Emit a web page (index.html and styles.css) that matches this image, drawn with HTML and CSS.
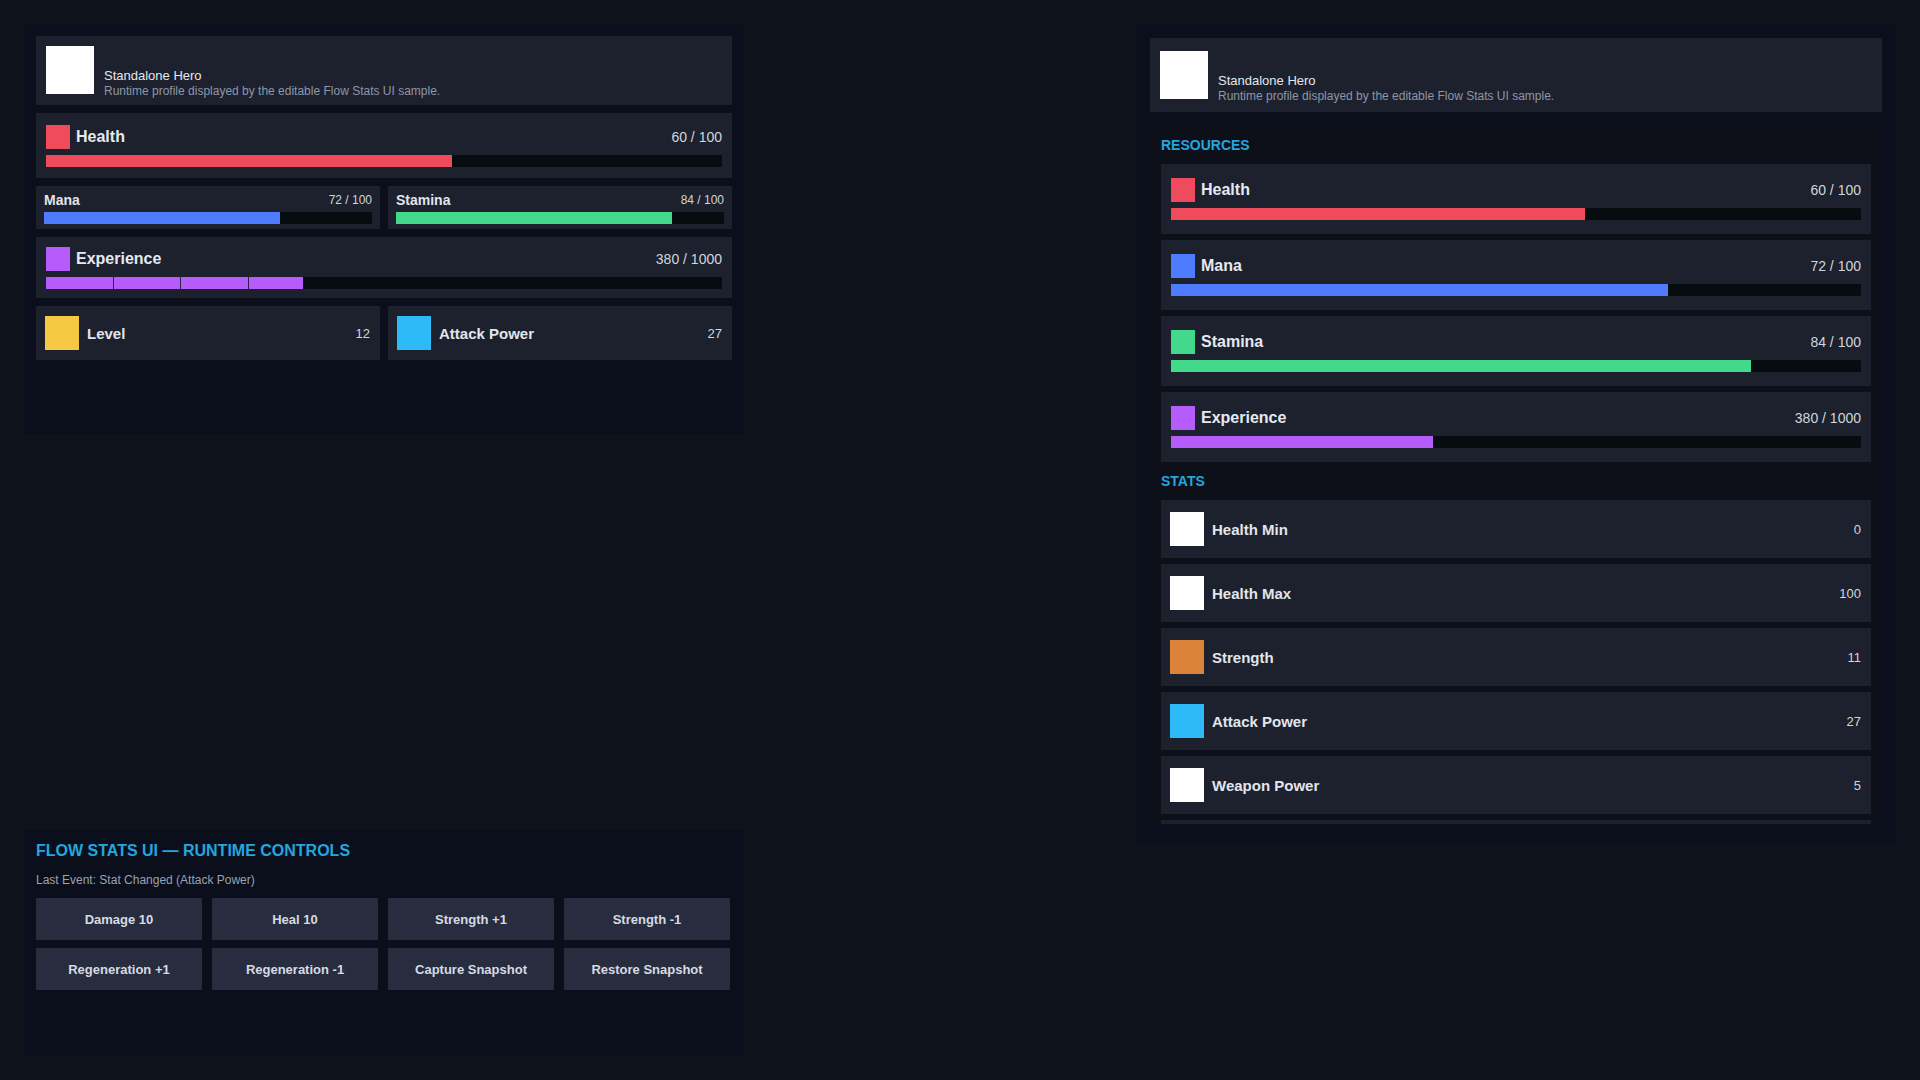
FILE: index.html
```html
<!DOCTYPE html>
<html lang="en">
<head>
<meta charset="utf-8">
<title>Flow Stats UI</title>
<link rel="stylesheet" href="styles.css">
</head>
<body>
<div class="left-col">
  <section class="panel hud">
    <div class="hero hero-compact">
      <div class="avatar"></div>
      <div class="hero-text">
        <div class="hero-name">Standalone Hero</div>
        <div class="hero-sub">Runtime profile displayed by the editable Flow Stats UI sample.</div>
      </div>
    </div>

    <div class="card big-res">
      <div class="res-head">
        <span class="swatch sw24 c-health"></span>
        <span class="res-label">Health</span>
        <span class="res-value">60 / 100</span>
      </div>
      <div class="track"><div class="fill c-health" style="width:60%"></div></div>
    </div>

    <div class="pair">
      <div class="card small-res">
        <div class="small-head">
          <span class="small-label">Mana</span>
          <span class="small-value">72 / 100</span>
        </div>
        <div class="track"><div class="fill c-mana" style="width:72%"></div></div>
      </div>
      <div class="card small-res">
        <div class="small-head">
          <span class="small-label">Stamina</span>
          <span class="small-value">84 / 100</span>
        </div>
        <div class="track"><div class="fill c-stamina" style="width:84%"></div></div>
      </div>
    </div>

    <div class="card xp-res">
      <div class="res-head">
        <span class="swatch sw24 c-xp"></span>
        <span class="res-label">Experience</span>
        <span class="res-value">380 / 1000</span>
      </div>
      <div class="track"><div class="fill c-xp" style="width:38%"></div><div class="segments"></div></div>
    </div>

    <div class="pair">
      <div class="card stat-card">
        <span class="swatch sw34 c-level"></span>
        <span class="stat-label">Level</span>
        <span class="stat-value">12</span>
      </div>
      <div class="card stat-card">
        <span class="swatch sw34 c-attack"></span>
        <span class="stat-label">Attack Power</span>
        <span class="stat-value">27</span>
      </div>
    </div>
  </section>

  <section class="panel controls">
    <h1 class="controls-title">FLOW STATS UI — RUNTIME CONTROLS</h1>
    <div class="last-event">Last Event: Stat Changed (Attack Power)</div>
    <div class="btn-grid">
      <button class="btn">Damage 10</button>
      <button class="btn">Heal 10</button>
      <button class="btn">Strength +1</button>
      <button class="btn">Strength -1</button>
      <button class="btn">Regeneration +1</button>
      <button class="btn">Regeneration -1</button>
      <button class="btn">Capture Snapshot</button>
      <button class="btn">Restore Snapshot</button>
    </div>
  </section>
</div>

<section class="panel sheet">
  <div class="hero hero-wide">
    <div class="avatar"></div>
    <div class="hero-text">
      <div class="hero-name">Standalone Hero</div>
      <div class="hero-sub">Runtime profile displayed by the editable Flow Stats UI sample.</div>
    </div>
  </div>

  <div class="scroll">
    <div class="section-label">RESOURCES</div>
    <div class="list">
      <div class="card wide-res">
        <div class="res-head">
          <span class="swatch sw24 c-health"></span>
          <span class="res-label">Health</span>
          <span class="res-value">60 / 100</span>
        </div>
        <div class="track"><div class="fill c-health" style="width:60%"></div></div>
      </div>
      <div class="card wide-res">
        <div class="res-head">
          <span class="swatch sw24 c-mana"></span>
          <span class="res-label">Mana</span>
          <span class="res-value">72 / 100</span>
        </div>
        <div class="track"><div class="fill c-mana" style="width:72%"></div></div>
      </div>
      <div class="card wide-res">
        <div class="res-head">
          <span class="swatch sw24 c-stamina"></span>
          <span class="res-label">Stamina</span>
          <span class="res-value">84 / 100</span>
        </div>
        <div class="track"><div class="fill c-stamina" style="width:84%"></div></div>
      </div>
      <div class="card wide-res">
        <div class="res-head">
          <span class="swatch sw24 c-xp"></span>
          <span class="res-label">Experience</span>
          <span class="res-value">380 / 1000</span>
        </div>
        <div class="track"><div class="fill c-xp" style="width:38%"></div></div>
      </div>
    </div>

    <div class="section-label">STATS</div>
    <div class="list">
      <div class="card stat-card wide-stat">
        <span class="swatch sw34 c-white"></span>
        <span class="stat-label">Health Min</span>
        <span class="stat-value">0</span>
      </div>
      <div class="card stat-card wide-stat">
        <span class="swatch sw34 c-white"></span>
        <span class="stat-label">Health Max</span>
        <span class="stat-value">100</span>
      </div>
      <div class="card stat-card wide-stat">
        <span class="swatch sw34 c-strength"></span>
        <span class="stat-label">Strength</span>
        <span class="stat-value">11</span>
      </div>
      <div class="card stat-card wide-stat">
        <span class="swatch sw34 c-attack"></span>
        <span class="stat-label">Attack Power</span>
        <span class="stat-value">27</span>
      </div>
      <div class="card stat-card wide-stat">
        <span class="swatch sw34 c-white"></span>
        <span class="stat-label">Weapon Power</span>
        <span class="stat-value">5</span>
      </div>
      <div class="card stat-card wide-stat stat-peek"></div>
    </div>
  </div>
</section>
</body>
</html>
```

FILE: styles.css
```css
* { box-sizing: border-box; }

html, body {
  margin: 0;
  width: 1920px;
  height: 1080px;
  overflow: hidden;
}

body {
  background: #0e121a;
  font-family: "Liberation Sans", Arial, sans-serif;
  color: #e2e6ee;
  padding: 24px;
  display: flex;
  justify-content: space-between;
  align-items: flex-start;
}

.left-col {
  width: 720px;
  height: 1032px;
  display: flex;
  flex-direction: column;
  justify-content: space-between;
}

.panel {
  background: #0b0e1b;
}

/* ---------- HUD (top-left) ---------- */
.hud {
  height: 410px;
  padding: 12px;
  display: flex;
  flex-direction: column;
  gap: 8px;
}

.card {
  background: #1c212d;
}

.hero {
  background: #1c212d;
  display: flex;
  align-items: flex-end;
  gap: 10px;
}

.hero-compact { padding: 10px 10px 11px; }
.hero-wide { padding: 13px 10px; }

.avatar {
  width: 48px;
  height: 48px;
  background: #ffffff;
  flex: none;
}

.hero-text {
  margin-bottom: -5px;
}

.hero-name {
  font-size: 13px;
  line-height: 16px;
  color: #e4e7ed;
}

.hero-sub {
  font-size: 12px;
  line-height: 15px;
  color: #8e96a8;
}

.swatch { flex: none; display: block; }
.sw24 { width: 24px; height: 24px; }
.sw34 { width: 34px; height: 34px; }

.c-health { background: #f04b5c; }
.c-mana { background: #4f7bff; }
.c-stamina { background: #42da8a; }
.c-xp { background: #b65cfd; }
.c-level { background: #f6c944; }
.c-attack { background: #2ebaf6; }
.c-strength { background: #dc833a; }
.c-white { background: #ffffff; }

.res-head {
  display: flex;
  align-items: center;
  height: 24px;
  margin-bottom: 6px;
}

.res-label {
  margin-left: 6px;
  font-size: 16px;
  font-weight: 700;
  color: #e6e9ef;
}

.res-value {
  margin-left: auto;
  font-size: 14px;
  color: #d2d6de;
}

.track {
  position: relative;
  height: 12px;
  background: #050d10;
}

.fill {
  height: 100%;
}

.segments {
  position: absolute;
  inset: 0;
  background: repeating-linear-gradient(90deg, transparent 0, transparent calc(10% - 1px), rgba(10, 14, 22, 0.8) calc(10% - 1px), rgba(10, 14, 22, 0.8) 10%);
}

.big-res { padding: 12px 10px 11px; }
.xp-res { padding: 10px 10px 9px; }

.pair {
  display: grid;
  grid-template-columns: 1fr 1fr;
  gap: 8px;
}

.small-res { padding: 6px 8px 5px; }

.small-head {
  display: flex;
  justify-content: space-between;
  align-items: center;
  height: 16px;
  margin-bottom: 4px;
}

.small-label {
  font-size: 14px;
  font-weight: 700;
  color: #e2e5ec;
}

.small-value {
  font-size: 12px;
  color: #d2d6de;
}

.stat-card {
  display: flex;
  align-items: center;
  padding: 10px 10px 10px 9px;
  gap: 8px;
}

.stat-label {
  font-size: 15px;
  font-weight: 700;
  color: #e2e5ec;
}

.stat-value {
  margin-left: auto;
  font-size: 13px;
  color: #d2d6de;
}

/* ---------- Controls (bottom-left) ---------- */
.controls {
  height: 226px;
  padding: 12px;
}

.controls-title {
  margin: 0;
  font-size: 16px;
  line-height: 18px;
  font-weight: 700;
  color: #22a7de;
}

.last-event {
  margin-top: 13px;
  font-size: 12px;
  line-height: 14px;
  color: #9aa2b1;
}

.btn-grid {
  margin-top: 11px;
  display: grid;
  grid-template-columns: repeat(4, 1fr);
  column-gap: 10px;
  row-gap: 8px;
  padding-right: 2px;
}

.btn {
  height: 42px;
  border: none;
  background: #272d3e;
  color: #d6dae3;
  font-family: "Liberation Sans", Arial, sans-serif;
  font-size: 13px;
  font-weight: 700;
  padding: 0;
}

/* ---------- Character sheet (right) ---------- */
.sheet {
  width: 760px;
  height: 819px;
  padding: 14px 14px 19px;
  display: flex;
  flex-direction: column;
}

.scroll {
  margin-top: 14px;
  height: 698px;
  overflow: hidden;
  padding: 0 11px;
  background: #0e1019;
}

.section-label {
  padding: 11px 0;
  font-size: 14px;
  line-height: 16px;
  font-weight: 700;
  color: #22a7de;
}

.list {
  display: flex;
  flex-direction: column;
  gap: 6px;
}

.wide-res { padding: 14px 10px; }

.wide-stat { padding: 12px 10px 12px 9px; }

.stat-peek {
  height: 58px;
  flex: none;
}
```
